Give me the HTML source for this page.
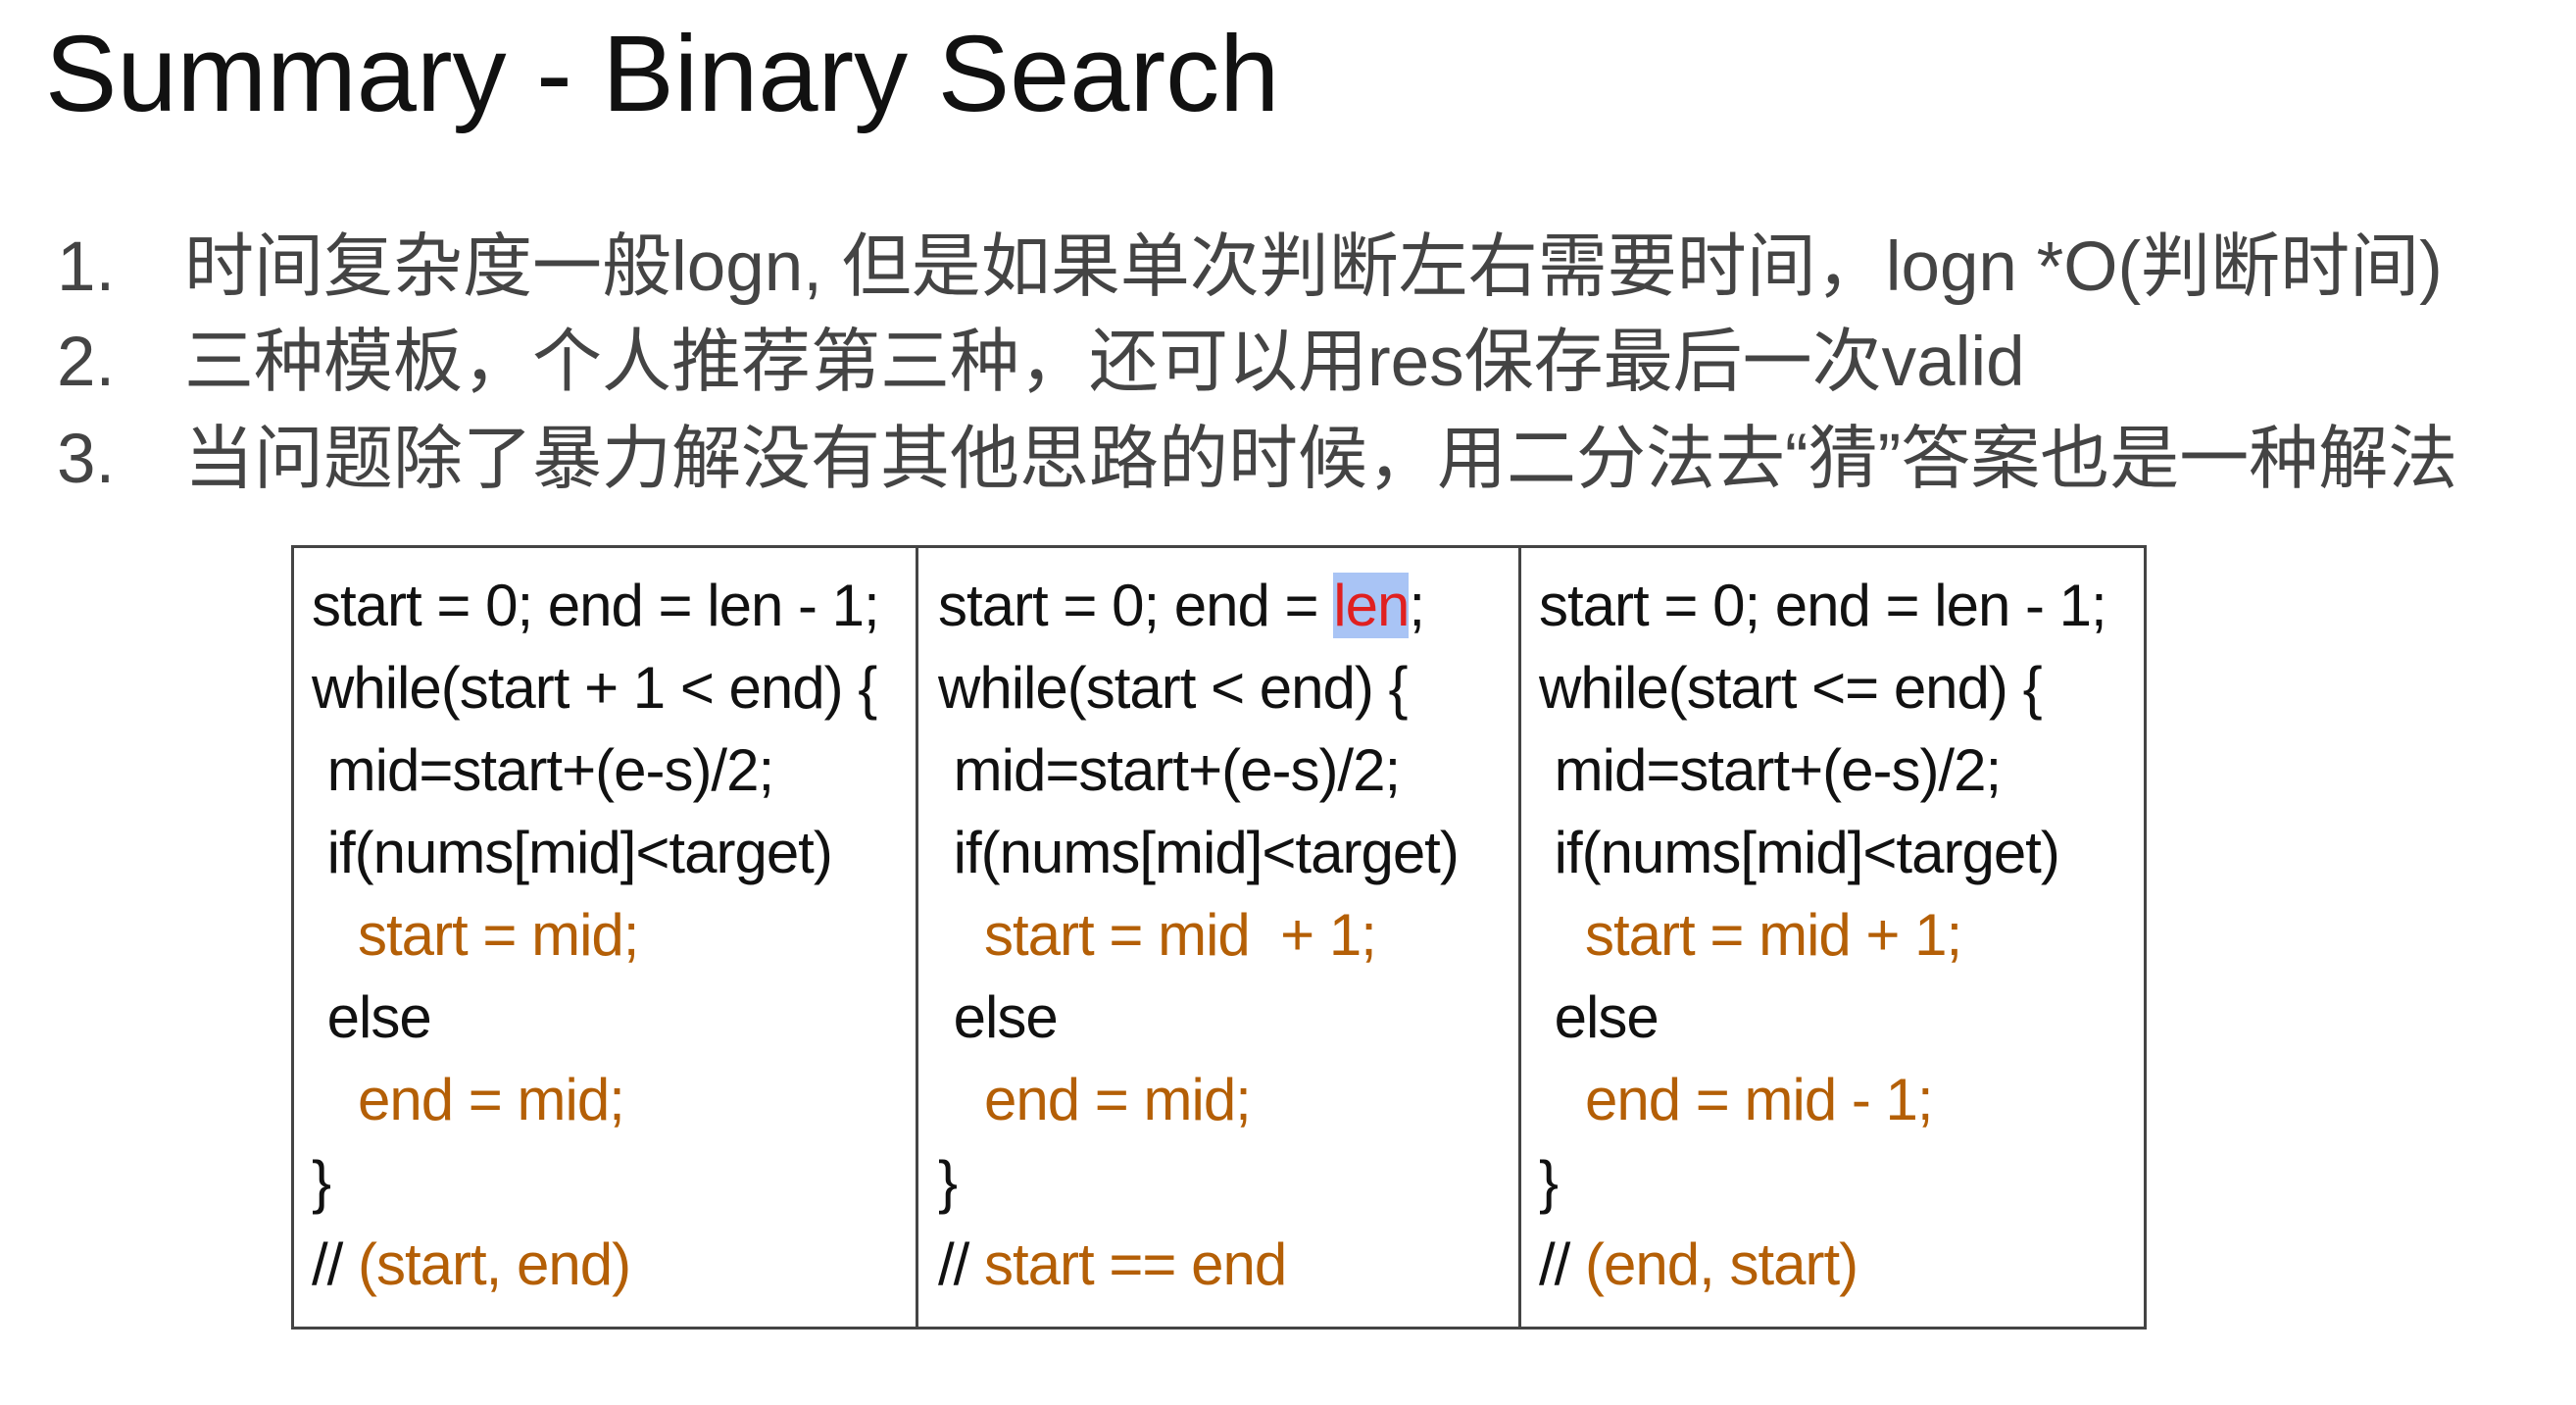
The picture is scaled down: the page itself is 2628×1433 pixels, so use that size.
<!DOCTYPE html>
<html><head><meta charset="utf-8"><style>
body{margin:0;width:2628px;height:1433px;background:#fff;position:relative;overflow:hidden;font-family:"Liberation Sans","Noto Sans CJK SC",sans-serif}
.t{position:absolute;left:46px;top:21px;font-size:110px;line-height:1;color:#111;white-space:nowrap}
.l{position:absolute;font-size:71px;line-height:1;color:#444;white-space:nowrap}
.n{left:58px}.x{left:188px}
.tb{position:absolute;left:297px;top:556px;width:1893px;height:800px;border:3px solid #444;box-sizing:border-box}
.d{position:absolute;top:556px;width:3px;height:800px;background:#444}
.c{position:absolute;font-size:60px;letter-spacing:-1px;line-height:84px;color:#111;white-space:pre}
.o{color:#b45f06}
.r{color:#e02020;background:#a9c4f5}
</style></head><body>
<div class="t">Summary - Binary Search</div>
<div class="l n" style="top:237px">1.</div><div class="l x" style="top:237px">时间复杂度一般logn, 但是如果单次判断左右需要时间，logn *O(判断时间)</div>
<div class="l n" style="top:334px">2.</div><div class="l x" style="top:334px">三种模板，个人推荐第三种，还可以用res保存最后一次valid</div>
<div class="l n" style="top:433px">3.</div><div class="l x" style="top:433px">当问题除了暴力解没有其他思路的时候，用二分法去“猜”答案也是一种解法</div>
<div class="tb"></div>
<div class="d" style="left:934px"></div>
<div class="d" style="left:1549px"></div>
<div class="c" style="left:318px;top:576px">start = 0; end = len - 1;
while(start + 1 &lt; end) {
 mid=start+(e-s)/2;
 if(nums[mid]&lt;target)
   <span class="o">start = mid;</span>
 else
   <span class="o">end = mid;</span>
}
// <span class="o">(start, end)</span></div>
<div class="c" style="left:957px;top:576px">start = 0; end = <span class="r">len</span>;
while(start &lt; end) {
 mid=start+(e-s)/2;
 if(nums[mid]&lt;target)
   <span class="o">start = mid  + 1;</span>
 else
   <span class="o">end = mid;</span>
}
// <span class="o">start == end</span></div>
<div class="c" style="left:1570px;top:576px">start = 0; end = len - 1;
while(start &lt;= end) {
 mid=start+(e-s)/2;
 if(nums[mid]&lt;target)
   <span class="o">start = mid + 1;</span>
 else
   <span class="o">end = mid - 1;</span>
}
// <span class="o">(end, start)</span></div>
</body></html>
